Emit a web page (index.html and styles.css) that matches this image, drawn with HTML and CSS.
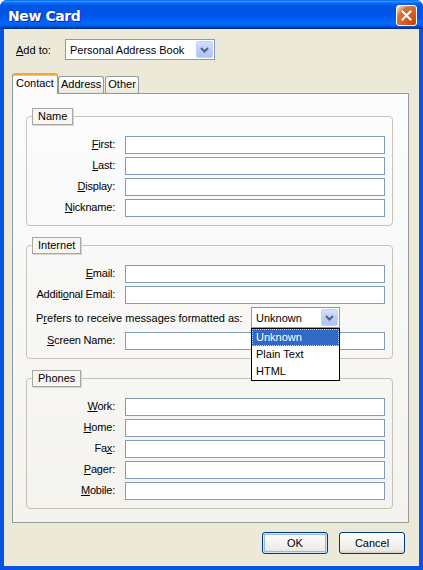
FILE: index.html
```html
<!DOCTYPE html>
<html>
<head>
<meta charset="utf-8">
<title>New Card</title>
<link rel="stylesheet" href="styles.css">
</head>
<body>
<div class="window">
  <div class="titlebar">
    <span class="title">New Card</span>
    <div class="close">
      <svg width="19" height="19" viewBox="0 0 19 19"><path d="M5.5 5.5 L13.5 13.5 M13.5 5.5 L5.5 13.5" stroke="#fff" stroke-width="2" stroke-linecap="square" fill="none"/></svg>
    </div>
  </div>
  <div class="client">
    <div class="addto">
      <label class="addto-label"><u>A</u>dd to:</label>
      <div class="select select-book">
        <span class="value">Personal Address Book</span>
        <span class="arrow"><svg width="15" height="15" viewBox="0 0 15 15"><path d="M4 6 L7.5 9.5 L11 6" stroke="#4D6185" stroke-width="2" fill="none"/></svg></span>
      </div>
    </div>
    <div class="tabs">
      <div class="tab active">Contact</div>
      <div class="tab">Address</div>
      <div class="tab">Other</div>
    </div>
    <div class="panel">
      <div class="group">
        <div class="legend">Name</div>
        <div class="grid">
          <label><u>F</u>irst:</label><div class="input"></div>
          <label><u>L</u>ast:</label><div class="input"></div>
          <label><u>D</u>isplay:</label><div class="input"></div>
          <label><u>N</u>ickname:</label><div class="input"></div>
        </div>
      </div>
      <div class="group">
        <div class="legend">Internet</div>
        <div class="grid">
          <label><u>E</u>mail:</label><div class="input"></div>
          <label>Additi<u>o</u>nal Email:</label><div class="input"></div>
          <div class="prefers">
            <span class="prefers-label">P<u>r</u>efers to receive messages formatted as:</span>
            <div class="select select-format">
              <span class="value">Unknown</span>
              <span class="arrow"><svg width="15" height="15" viewBox="0 0 15 15"><path d="M4 6 L7.5 9.5 L11 6" stroke="#4D6185" stroke-width="2" fill="none"/></svg></span>
              <ul class="dropdown">
                <li class="selected">Unknown</li>
                <li>Plain Text</li>
                <li>HTML</li>
              </ul>
            </div>
          </div>
          <label><u>S</u>creen Name:</label><div class="input"></div>
        </div>
      </div>
      <div class="group">
        <div class="legend">Phones</div>
        <div class="grid">
          <label><u>W</u>ork:</label><div class="input"></div>
          <label><u>H</u>ome:</label><div class="input"></div>
          <label>Fa<u>x</u>:</label><div class="input"></div>
          <label><u>P</u>ager:</label><div class="input"></div>
          <label><u>M</u>obile:</label><div class="input"></div>
        </div>
      </div>
    </div>
    <div class="buttons">
      <button class="btn default">OK</button>
      <button class="btn">Cancel</button>
    </div>
  </div>
</div>
</body>
</html>
```
FILE: styles.css
```css
* { box-sizing: border-box; }

body {
  margin: 0;
  background: #ffffff;
  font-family: "Liberation Sans", Arial, sans-serif;
  font-size: 11px;
  color: #000;
}

u { text-decoration: underline; text-underline-offset: 1px; }

.window {
  width: 423px;
  height: 570px;
  display: flex;
  flex-direction: column;
  border-radius: 7px 7px 0 0;
  overflow: hidden;
  background: #0054E3;
}

.titlebar {
  flex: none;
  height: 29px;
  display: flex;
  justify-content: space-between;
  align-items: flex-start;
  padding: 5px 6px 0 8px;
  background: linear-gradient(to bottom, #0058EE 0%, #3593FF 4%, #288EFF 6%, #127DFF 8%, #036FFC 10%, #0262EE 14%, #0057E5 20%, #0054E3 24%, #0055EB 56%, #005BF5 66%, #026AFE 76%, #0062EF 86%, #0052D6 92%, #0040AB 94%, #003092 100%);
}

.title {
  font-family: "DejaVu Sans", sans-serif;
  font-weight: bold;
  font-size: 14px;
  letter-spacing: -0.4px;
  line-height: 21px;
  margin-top: 1px;
  color: #fff;
  text-shadow: 1px 1px 0 #0F1E8A;
}

.close {
  width: 21px;
  height: 21px;
  border: 1px solid #fff;
  border-radius: 3px;
  background: radial-gradient(circle at 90% 90%, #CC4600 0%, #DC6527 55%, #CD7546 70%, #FFCCB2 90%, #fff 100%);
  display: flex;
  align-items: center;
  justify-content: center;
}

.client {
  flex: 1;
  background: #ECE9D8;
  border: 4px solid #0A55E0;
  border-top: 0;
  display: flex;
  flex-direction: column;
  padding: 10px 0 0 8px;
}

.addto {
  display: flex;
  align-items: center;
  padding-left: 4px;
  height: 21px;
}

.addto-label { width: 49px; }

.select {
  position: relative;
  height: 21px;
  background: #fff;
  border: 1px solid #7F9DB9;
  display: flex;
  align-items: center;
  padding: 1px;
}

.select .value { flex: 1; padding-left: 3px; }

.select-book { width: 150px; }
.select-format { width: 89px; }

.arrow {
  width: 17px;
  height: 17px;
  align-self: flex-start;
  border: 1px solid #C3D3FD;
  border-radius: 2px;
  background: linear-gradient(to bottom, #D3DFFC, #B9CBF6 60%, #B0C3F2);
  display: flex;
  align-items: center;
  justify-content: center;
}

.tabs {
  display: flex;
  align-items: flex-end;
  height: 20px;
  margin-top: 13px;
}

.tab {
  height: 17px;
  border: 1px solid #919B9C;
  border-bottom: 0;
  border-radius: 3px 3px 0 0;
  padding: 0 2px;
  line-height: 15px;
  background: linear-gradient(to bottom, #FFFFFF, #F3F2ED 60%, #E8E6DC);
  margin-right: 1px;
}

.tab.active {
  height: 21px;
  margin-bottom: -1px;
  margin-right: 0;
  padding: 1px 3px 0;
  position: relative;
  z-index: 1;
  background: #FCFCFE;
  border-top: 2px solid #F2A53B;
  box-shadow: inset 0 1px 0 #FFC83C;
}

.panel {
  height: 430px;
  margin-right: 10px;
  border: 1px solid #919B9C;
  background: linear-gradient(to bottom, #FCFCFE, #F4F3EE);
  padding: 22px 15px 0 13px;
}

.group {
  border: 1px solid #C5C3B5;
  border-radius: 4px;
  padding: 0 7px 8px 0;
}

.group + .group { margin-top: 19px; }

.legend {
  width: max-content;
  height: 17px;
  margin: -9px 0 0 5px;
  padding: 0 5px;
  line-height: 15px;
  border: 1px solid #A9A8A2;
  background: #F7F6F2;
  box-shadow: 1px 1px 0 #D8D6CC;
}

.grid {
  display: grid;
  grid-template-columns: 88px 260px;
  column-gap: 10px;
  row-gap: 3px;
  margin-top: 11px;
}

.grid label {
  text-align: right;
  line-height: 16px;
  white-space: nowrap;
  letter-spacing: -0.2px;
}

.input {
  height: 18px;
  border: 1px solid #7F9DB9;
  background: #fff;
}

.prefers {
  grid-column: 1 / -1;
  display: flex;
  align-items: center;
  padding-left: 9px;
  height: 21px;
  margin-bottom: 1px;
}

.prefers-label {
  width: 215px;
  white-space: nowrap;
}

.dropdown {
  position: absolute;
  top: 20px;
  left: -1px;
  width: 89px;
  margin: 0;
  padding: 0;
  list-style: none;
  border: 1px solid #000;
  background: #fff;
  z-index: 5;
}

.dropdown li {
  height: 17px;
  line-height: 15px;
  padding-left: 3px;
  border: 1px solid transparent;
}

.dropdown li.selected {
  background: #316AC5;
  color: #fff;
  border: 1px dotted #C9D8F2;
}

.buttons {
  display: flex;
  justify-content: flex-end;
  gap: 11px;
  margin-top: 9px;
  padding-right: 14px;
}

.btn {
  width: 66px;
  height: 22px;
  border: 1px solid #003C74;
  border-radius: 3px;
  background: linear-gradient(to bottom, #FFFFFF, #F4F3EE 50%, #ECEBE6 85%, #D6D0C5);
  font-family: "Liberation Sans", Arial, sans-serif;
  font-size: 11px;
  color: #000;
  padding: 0;
}

.btn.default {
  box-shadow: inset 0 0 0 1px #CEE7FF, inset 0 0 0 2px #98B8EA;
}
```
